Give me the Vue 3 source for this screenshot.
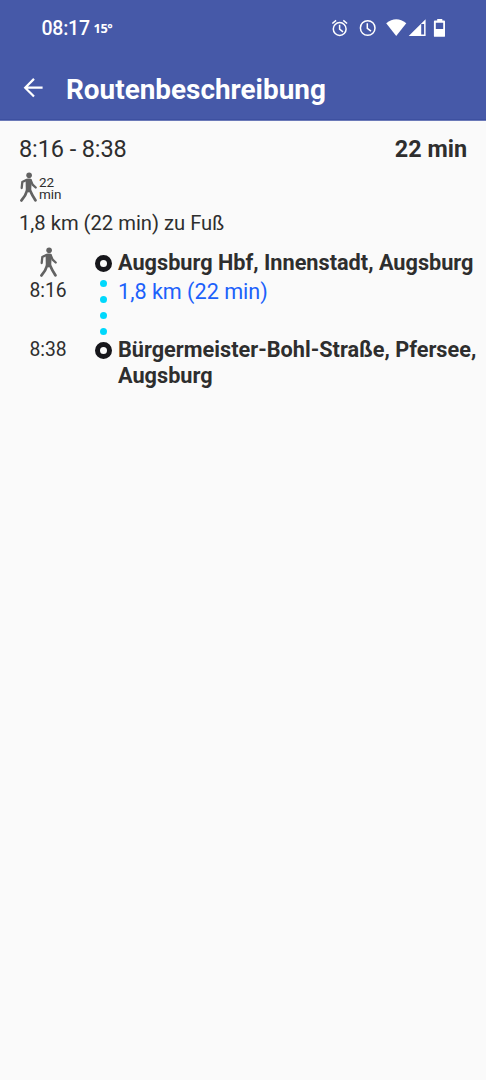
<script setup>
const stops = [
  { time: '8:16', name: 'Augsburg Hbf, Innenstadt, Augsburg', leg: '1,8 km (22 min)' },
  { time: '8:38', name: 'Bürgermeister-Bohl-Straße, Pfersee, Augsburg' }
]
</script>

<template>
  <div class="screen">
    <svg class="defs" width="0" height="0" aria-hidden="true">
      <symbol id="walker" viewBox="0 0 17 30">
        <circle cx="9.1" cy="3.2" r="2.8" />
        <path d="M6.4 7.9L2.3 10.1L1.7 16M10.6 8L12.6 12.6L15.7 15.5" fill="none" stroke="currentColor" stroke-width="2.3" stroke-linecap="round" stroke-linejoin="round" />
        <path d="M7.3 18Q5.8 23.5 1.5 28.4M9.8 18Q12.3 23.5 15.4 28.3" fill="none" stroke="currentColor" stroke-width="2.8" stroke-linecap="round" />
        <path d="M5.6 8Q6 6.7 7.6 6.5H9.6Q11.4 6.7 11.7 8.4L11.2 18.6L8.6 20.6L5.8 18.6Z" />
      </symbol>
    </svg>

    <header class="header">
      <div class="status">
        <span class="clock">08:17</span>
        <span class="temp">15°</span>
        <svg class="status-icons" viewBox="0 0 120 24" width="120" height="24">
          <g fill="none" stroke="#fff" stroke-width="1.5">
            <circle cx="13.7" cy="13" r="6.4" />
            <path d="M13.6 8.8V13.2L17 15.8M10.1 4.4L6.3 7.5M17.3 4.4L21.1 7.5" />
            <circle cx="41.7" cy="12" r="7.3" />
            <path d="M41.3 7.2V12.3L45 15.2" />
          </g>
          <path d="M60.2 7.2Q70.2-.8 80.3 7.2L70.2 19.9Z" fill="#fff" />
          <path d="M99.6 3.3V20.1H82.7ZM98.1 8H95.2V18.5H98.1Z" fill="#fff" fill-rule="evenodd" />
          <path d="M111.2 3H116.3V4.5H118.1Q119 4.5 119 5.4V19.9Q119 20.8 118.1 20.8H108.7Q107.9 20.8 107.9 19.9V5.4Q107.9 4.5 108.7 4.5H111.2ZM109.8 6.7V13.1H117.2V6.7Z" fill="#fff" fill-rule="evenodd" />
        </svg>
      </div>
      <div class="toolbar">
        <svg class="back" viewBox="0 0 20 20" width="20" height="20">
          <path d="M19.6 9.7H2.4M11 .9L2.2 9.7L11 18.5" fill="none" stroke="#fff" stroke-width="2.2" />
        </svg>
        <h1>Routenbeschreibung</h1>
      </div>
    </header>

    <section class="summary">
      <div class="headline">
        <span class="range">8:16 - 8:38</span>
        <strong>22 min</strong>
      </div>
      <div class="modes">
        <svg class="walk" width="17" height="30"><use href="#walker" /></svg>
        <div class="walk-time"><span>22</span><span>min</span></div>
      </div>
      <p class="distance">1,8 km (22 min) zu Fuß</p>
    </section>

    <section class="route">
      <div v-for="stop in stops" :key="stop.time" class="stop">
        <div class="when">
          <svg v-if="stop.leg" class="walk" width="17" height="30"><use href="#walker" /></svg>
          <span class="time">{{ stop.time }}</span>
        </div>
        <div class="track">
          <i class="ring"></i>
          <template v-if="stop.leg"><i v-for="n in 4" :key="n" class="dot"></i></template>
        </div>
        <div class="place">
          <div class="name">{{ stop.name }}</div>
          <div v-if="stop.leg" class="leg">{{ stop.leg }}</div>
        </div>
      </div>
    </section>
  </div>
</template>

<style>
body { background: #fafafa; }
</style>

<style scoped>
.screen { width: 486px; height: 1080px; overflow: hidden; background: #fafafa; color: #2e2e2e; font-family: Roboto, sans-serif; }
.defs { display: block; }
svg { display: block; flex: none; }
.header { box-sizing: border-box; height: 121px; background: #4659a8; color: #fff; border-bottom: 1px solid #6b79b8; box-shadow: inset 0 -1px #3d50a0; }
.status { display: flex; height: 56px; padding-left: 41.5px; line-height: 57px; }
.clock { width: 52px; font-size: 19.5px; letter-spacing: -.25px; font-weight: 500; }
.temp { font: 700 12.8px/57px "Noto Sans", sans-serif; letter-spacing: -.4px; }
.status-icons { margin: 16px 40px 0 auto; }
.toolbar { display: flex; align-items: center; height: 64px; padding-left: 23px; }
.back { margin-right: 23px; }
h1 { margin: 4px 0 0; font-size: 27.9px; line-height: 34px; font-weight: 700; }
.summary { padding: 13px 19px 0; }
.headline { display: flex; justify-content: space-between; height: 30px; font-size: 23.5px; line-height: 30px; }
.range { letter-spacing: -.1px; }
.headline strong { font-weight: 700; font-size: 23.4px; line-height: 31px; }
.modes { display: flex; height: 44px; padding: 8px 0 0 1px; box-sizing: border-box; }
.walk { color: #626262; fill: #626262; }
.walk-time { display: flex; flex-direction: column; margin: 5px 0 0 2px; font-size: 13.5px; line-height: 11.5px; }
.distance { margin: 0; font-size: 20.2px; line-height: 30px; }
.route { padding-top: 9px; }
.stop { display: flex; min-height: 87px; }
.when { display: flex; flex-direction: column; align-items: center; width: 96px; font-size: 19.3px; line-height: 28px; }
.time:first-child { margin-top: 2px; }
.track { display: flex; flex-direction: column; align-items: center; width: 15px; padding-top: 8px; }
.ring { box-sizing: border-box; flex: none; width: 17px; height: 17px; border: 5px solid #16161b; border-radius: 50%; margin-bottom: 8px; }
.dot { flex: none; width: 7px; height: 7px; border-radius: 50%; background: #00d8fc; margin-bottom: 9px; }
.dot:last-child { margin-bottom: -1px; }
.place { width: 368px; padding: 3px 0 0 7px; font-size: 21.6px; line-height: 26px; }
.name { font-weight: 700; font-size: 21.7px; }
.leg { margin-top: 3px; color: #1c61fb; }
</style>
